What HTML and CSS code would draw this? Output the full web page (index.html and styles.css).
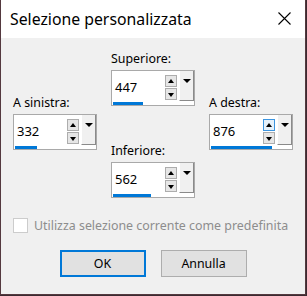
FILE: index.html
```html
<!DOCTYPE html>
<html lang="it">
<head>
    <meta charset="UTF-8">
    <title>Selezione personalizzata</title>
    <link rel="stylesheet" href="styles.css">
</head>
<body>
    <div class="window">
        <div class="titlebar">
            <span class="title">Selezione personalizzata</span>
            <svg class="close" width="13" height="13" viewBox="0 0 13 13">
                <path d="M0.5 0.5 L12.5 12.5 M12.5 0.5 L0.5 12.5" stroke="#000" stroke-width="1.1" fill="none"/>
            </svg>
        </div>

        <div class="content">
            <div class="margins">
                <div class="group side">
                    <div class="label">A sinistra:</div>
                    <div class="spinbox">
                        <div class="row">
                            <span class="value">332</span>
                            <div class="spin">
                                <span class="arrow up"></span>
                                <span class="arrow down"></span>
                            </div>
                            <span class="drop"></span>
                        </div>
                        <div class="bar" style="width: 22px"></div>
                    </div>
                </div>

                <div class="center">
                    <div class="group">
                        <div class="label">Superiore:</div>
                        <div class="spinbox">
                            <div class="row">
                                <span class="value">447</span>
                                <div class="spin">
                                    <span class="arrow up"></span>
                                    <span class="arrow down"></span>
                                </div>
                                <span class="drop"></span>
                            </div>
                            <div class="bar" style="width: 30px"></div>
                        </div>
                    </div>
                    <div class="group">
                        <div class="label">Inferiore:</div>
                        <div class="spinbox">
                            <div class="row">
                                <span class="value">562</span>
                                <div class="spin">
                                    <span class="arrow up"></span>
                                    <span class="arrow down"></span>
                                </div>
                                <span class="drop"></span>
                            </div>
                            <div class="bar" style="width: 38px"></div>
                        </div>
                    </div>
                </div>

                <div class="group side">
                    <div class="label">A destra:</div>
                    <div class="spinbox">
                        <div class="row">
                            <span class="value">876</span>
                            <div class="spin">
                                <span class="arrow up hot"></span>
                                <span class="arrow down"></span>
                            </div>
                            <span class="drop"></span>
                        </div>
                        <div class="bar" style="width: 61px"></div>
                    </div>
                </div>
            </div>

            <div class="check">
                <span class="checkbox"></span>
                <span>Utilizza selezione corrente come predefinita</span>
            </div>

            <div class="buttons">
                <button class="btn default">OK</button>
                <button class="btn">Annulla</button>
            </div>
        </div>
    </div>
</body>
</html>
```

FILE: styles.css
```css
body {
    margin: 0;
    width: 307px;
    height: 296px;
    background: #3b2a30;
    font-family: 'Noto Sans', 'Open Sans', sans-serif;
    font-size: 12.4px;
    color: #000;
}

.window {
    width: 304px;
    height: 294px;
    border: 1px solid #54393f;
    border-top: none;
    background: #f0f0f0;
    display: flex;
    flex-direction: column;
}

.titlebar {
    height: 38px;
    background: #fff;
    display: flex;
    align-items: center;
    justify-content: space-between;
    padding: 0 14px 0 9px;
    flex-shrink: 0;
}

.title {
    font-size: 15.8px;
    margin-top: -1px;
}

.close {
    display: block;
    margin-top: -1px;
}

.content {
    padding: 0 12px;
    flex: 1;
}

.margins {
    display: grid;
    grid-template-columns: 84px 84px 84px;
    column-gap: 14px;
}

.center {
    display: flex;
    flex-direction: column;
    gap: 38px;
    padding-top: 14px;
}

.side {
    margin-top: 58px;
}

.label {
    line-height: 14px;
    height: 14px;
    margin-bottom: 4px;
}

.spinbox {
    border: 1px solid #a9a9a9;
    background: #fff;
    height: 34px;
}

.row {
    display: flex;
    height: 30px;
}

.value {
    flex: 1;
    font-size: 13px;
    padding: 8px 0 0 3px;
    line-height: 16px;
}

.spin {
    display: flex;
    flex-direction: column;
    gap: 1px;
    padding-top: 4px;
    margin-right: 2px;
}

.arrow {
    width: 10px;
    height: 10px;
    border: 1px solid #adadad;
    background: #e6e6e6;
    position: relative;
}

.arrow::after {
    content: "";
    position: absolute;
    left: 2px;
    border-left: 3px solid transparent;
    border-right: 3px solid transparent;
}

.arrow.up::after {
    top: 3px;
    border-bottom: 4px solid #000;
}

.arrow.down::after {
    top: 4px;
    border-top: 4px solid #000;
}

.arrow.hot {
    background: #e5f1fb;
    border-color: #3c95e0;
}

.drop {
    width: 13px;
    border-left: 1px solid #fff;
    border-right: 1px solid #8a8a8a;
    border-bottom: 1px solid #8a8a8a;
    background: #f0f0f0;
    position: relative;
}

.drop::after {
    content: "";
    position: absolute;
    left: 3px;
    top: 8px;
    border-left: 4px solid transparent;
    border-right: 4px solid transparent;
    border-top: 4px solid #000;
}

.bar {
    height: 3px;
    margin: 1px 0 0 1px;
    background: #0078d7;
}

.check {
    display: flex;
    align-items: center;
    gap: 6px;
    margin-top: 19px;
    color: #8d8d8d;
}

.checkbox {
    width: 13px;
    height: 13px;
    border: 1px solid #cccccc;
    background: #fff;
}

.buttons {
    display: flex;
    justify-content: center;
    gap: 15px;
    margin-top: 16px;
}

.btn {
    width: 86px;
    height: 27px;
    border: 1px solid #adadad;
    background: #e1e1e1;
    font-family: inherit;
    font-size: 12.4px;
    color: #000;
    padding: 0;
}

.btn.default {
    border: 2px solid #0078d7;
}
```
